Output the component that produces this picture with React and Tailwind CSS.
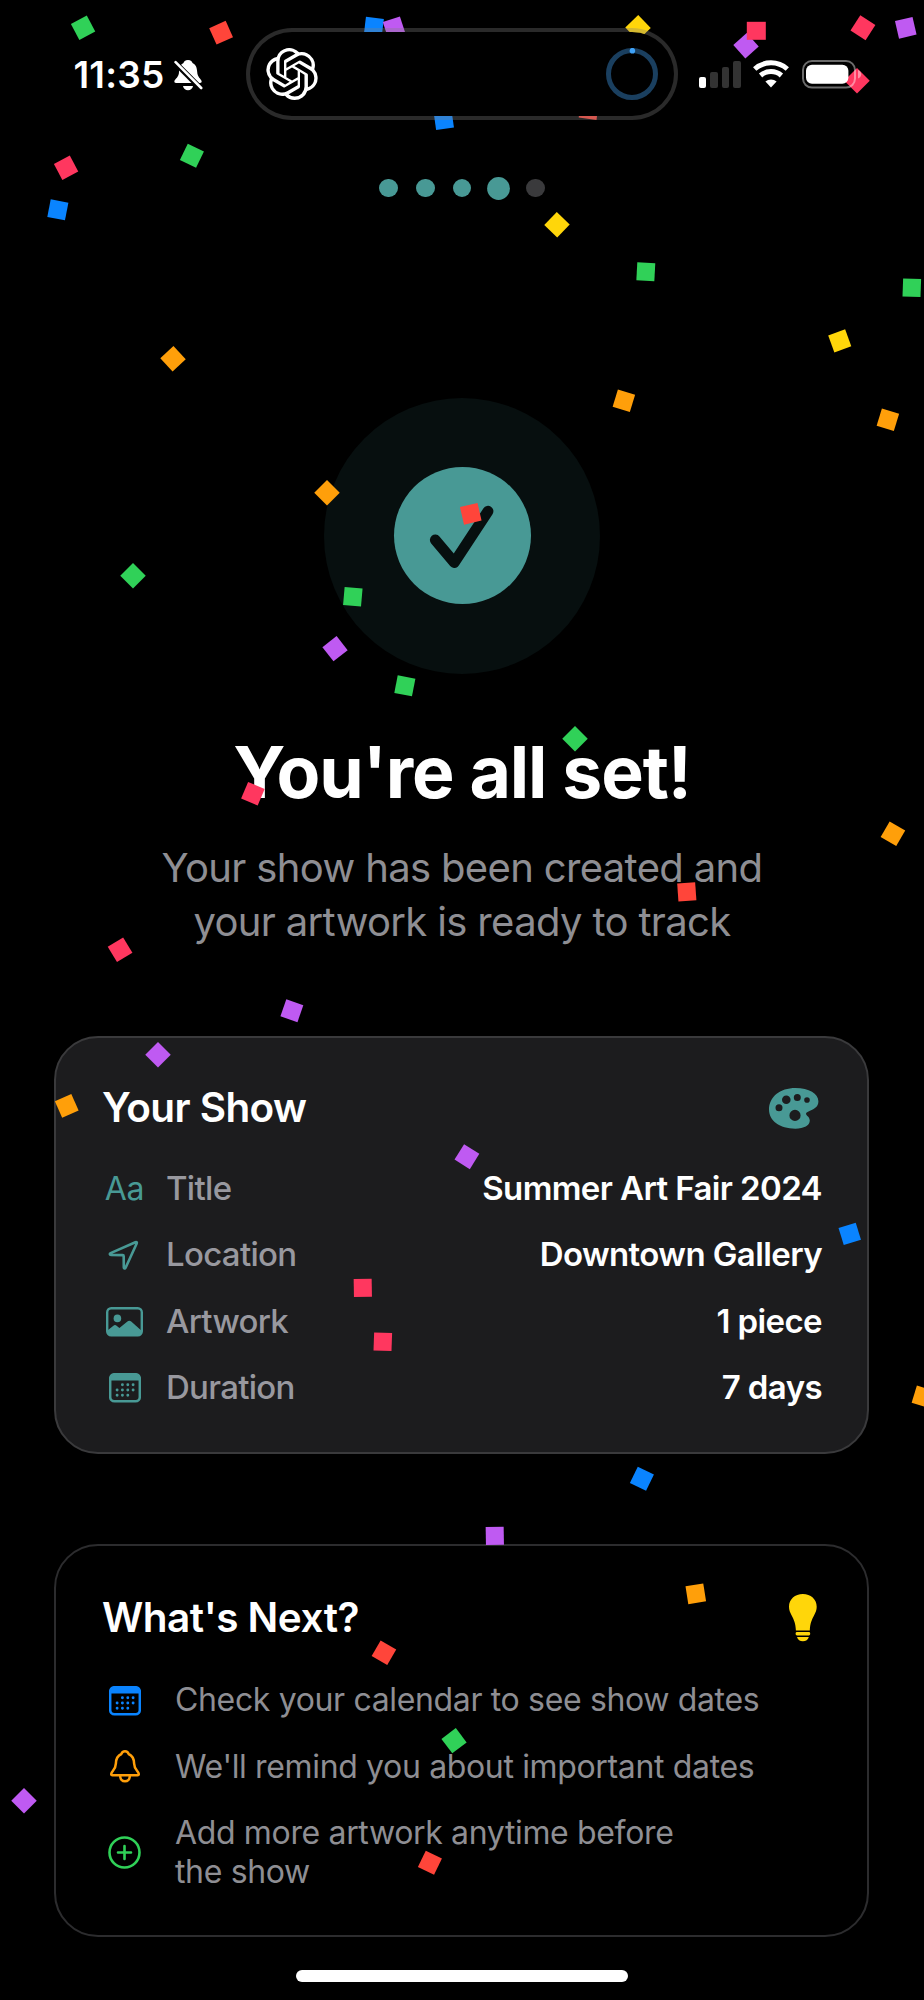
import React from "react";
import { SiOpenai } from "react-icons/si";

const RED = "#ff453a";
const PINK = "#ff375f";
const ORANGE = "#ff9f0a";
const YELLOW = "#ffd60a";
const GREEN = "#30d158";
const BLUE = "#0a84ff";
const PURPLE = "#bf5af2";

// [center x, center y, rotation, color]
const confetti = [
  [83, 27.6, 62, GREEN],
  [220.7, 33.4, 66, RED],
  [373.6, 27.3, 7, BLUE],
  [394, 27.8, 72, PURPLE],
  [66, 168.3, 62, PINK],
  [58.3, 210, 11, BLUE],
  [191.7, 155.7, 26, GREEN],
  [443.7, 120.3, -8, BLUE],
  [638.3, 27.5, 46, YELLOW],
  [746, 46.3, 48, PURPLE],
  [756.3, 30.7, 0, PINK],
  [863.3, 27.5, 33, PINK],
  [906, 27.7, -13, PURPLE],
  [856.5, 81, 45, PINK],
  [588.7, 110.2, 8, RED],
  [557, 224.5, 44, YELLOW],
  [172.7, 358.7, 47, ORANGE],
  [326.5, 493.3, 45, ORANGE],
  [132.7, 575.5, 45, GREEN],
  [353.3, 597.3, 5, GREEN],
  [334.8, 648.7, 52, PURPLE],
  [404.7, 686, 11, GREEN],
  [646, 272, 3, GREEN],
  [911.7, 288, 2, GREEN],
  [840.3, 340.7, -20, YELLOW],
  [623.7, 400.7, 17, ORANGE],
  [888, 419.7, 17, ORANGE],
  [471, 514.3, -13, RED],
  [253, 794.3, 23, PINK],
  [119.7, 950.3, 59, PINK],
  [292, 1011, 19, PURPLE],
  [574.7, 739, 45, GREEN],
  [893.3, 834.3, 30, ORANGE],
  [687.3, 892.3, -4, RED],
  [158, 1055.3, 45, PURPLE],
  [67, 1106, -24, ORANGE],
  [362.7, 1287.7, -1, PINK],
  [383, 1342, 2, PINK],
  [467.3, 1156.5, 32, PURPLE],
  [850.3, 1234.3, -17, BLUE],
  [923.4, 1396.5, 17, ORANGE],
  [642, 1479.3, 26, BLUE],
  [494.8, 1536.4, -1, PURPLE],
  [696.3, 1594.3, -9, ORANGE],
  [384, 1652.8, 30, RED],
  [454.3, 1740.6, 53, GREEN],
  [24, 1801.3, 45, PURPLE],
  [429.7, 1862.9, 26, RED],
];

const Confetti = () => (
  <div className="pointer-events-none absolute inset-0 z-10 overflow-hidden">
    {confetti.map(([x, y, angle, color]) => (
      <span
        key={`${x}-${y}`}
        className="absolute size-[18.4px] -translate-1/2"
        style={{ left: x, top: y, rotate: `${angle}deg`, backgroundColor: color }}
      />
    ))}
  </div>
);

const BellSlashIcon = () => (
  <svg width="29" height="31" viewBox="0 0 29 31" className="mt-0.5 ml-2.5">
    <path
      fill="#fff"
      d="M14 0C11.2 0 9.8 1.6 9.5 3C6.2 4.6 5 8 5 12C5 17 1 19 .4 21C.1 22.3 .8 23 2 23H26C27.2 23 27.9 22.3 27.6 21C27 19 23.4 17 23.2 12C23 8 22 4.6 18.5 3C18.2 1.6 16.8 0 14 0ZM9 26H19C18.6 28.6 16.6 30.2 14 30.2S9.4 28.6 9 26Z"
    />
    <path d="M.6 2.2L27.6 29.2" stroke="#000" strokeWidth="5.6" />
    <path d="M1.6 2.2L27.2 28" stroke="#fff" strokeWidth="2.6" strokeLinecap="round" />
  </svg>
);

const WifiIcon = () => (
  <svg width="36" height="28" viewBox="-18 -27.4 36 28" className="ml-3" fill="none" stroke="#fff" strokeWidth="5">
    <path d="M-16.3 -18.4A24.6 24.6 0 0 1 16.3 -18.4" />
    <path d="M-10.4 -11.9A15.8 15.8 0 0 1 10.4 -11.9" />
    <path d="M0 0L-5.6 -5.8A8.2 8.2 0 0 1 5.6 -5.8Z" fill="#fff" stroke="none" />
  </svg>
);

const BatteryIcon = () => (
  <svg width="60" height="29" viewBox="0 0 60 29" className="ml-[13px]">
    <rect x="1" y="1" width="52" height="26.6" rx="9" fill="none" stroke="#fff" strokeOpacity=".42" strokeWidth="2" />
    <rect x="4" y="4.8" width="42.4" height="19" rx="6" fill="#fff" />
    <path d="M56 10C58.2 10.8 59.2 12.4 59.2 14.3S58.2 17.8 56 18.6Z" fill="#fff" fillOpacity=".45" />
  </svg>
);

const StatusBar = () => (
  <header className="relative z-20 flex h-[120px] items-end">
    <div className="flex h-[92px] w-[246px] items-center pl-[73.5px]">
      <span className="mt-px text-[37px] font-semibold leading-none tracking-[0.2px]">11:35</span>
      <BellSlashIcon />
    </div>
    <div className="flex h-[92px] w-[432px] items-center justify-between rounded-full border-4 border-[rgba(128,128,128,0.33)] bg-black bg-clip-padding px-4">
      <SiOpenai size={52} />
      <svg width="52" height="52" viewBox="0 0 52 52" fill="none">
        <circle cx="26" cy="26" r="23.5" stroke="#1a3f5f" strokeWidth="5" />
        <circle cx="26.4" cy="2.7" r="2.8" fill="#3fa2f7" />
      </svg>
    </div>
    <div className="flex h-[92px] items-center pl-[20.5px]">
      <div className="flex h-[27px] items-end gap-1">
        <span className="h-[10.5px] w-[7.5px] rounded-[2px] bg-white" />
        <span className="h-[15.5px] w-[7.5px] rounded-[2px] bg-[#333]" />
        <span className="h-[21px] w-[7.5px] rounded-[2px] bg-[#333]" />
        <span className="h-[27px] w-[7.5px] rounded-[2px] bg-[#333]" />
      </div>
      <WifiIcon />
      <BatteryIcon />
    </div>
  </header>
);

const CalendarIcon = () => (
  <svg width="32" height="30" viewBox="0 0 32 30" fill="none">
    <rect x="1.2" y="1.2" width="29.6" height="27.1" rx="4.2" stroke="currentColor" strokeWidth="2.5" />
    <path d="M1 7.4V5A4 4 0 0 1 5 1H27A4 4 0 0 1 31 5V7.4Z" fill="currentColor" />
    <g stroke="currentColor" strokeWidth="2.9" strokeLinecap="round">
      <path d="M13.4 11.8h.01M18.8 11.8h.01M24.1 11.8h.01" />
      <path d="M8.1 17h.01M13.4 17h.01M18.8 17h.01M24.1 17h.01" />
      <path d="M8.1 22.3h.01M13.4 22.3h.01M18.8 22.3h.01" />
    </g>
  </svg>
);

const LocationIcon = () => (
  <svg width="31" height="31" viewBox="0 0 31 31" className="mr-0.5" fill="none" stroke="currentColor" strokeWidth="2.6" strokeLinejoin="round">
    <path d="M27.4 2.2L2.6 13.1C1.4 13.7 1.6 14.9 3 14.9L14.6 15.1C15.4 15.1 15.7 15.4 15.7 16.2L15.8 27.4C15.8 28.7 17 28.9 17.6 27.7L28.7 3.5C29.2 2.3 28.6 1.7 27.4 2.2Z" />
  </svg>
);

const ImageIcon = () => (
  <svg width="37" height="30" viewBox="0 0 37 30" fill="none">
    <rect x="1.2" y="1.2" width="34.6" height="27" rx="4" stroke="currentColor" strokeWidth="2.4" />
    <circle cx="11.4" cy="11.4" r="3.8" fill="currentColor" />
    <path
      fill="currentColor"
      d="M1.4 23.6L7.4 18.7Q9 17.4 10.6 18.7L13.4 21L21.4 14.4Q23.3 12.9 25.2 14.4L35.6 23.8V25Q35.6 28.4 32 28.4H5Q1.4 28.4 1.4 25Z"
    />
  </svg>
);

const PaletteIcon = () => (
  <svg width="50" height="41" viewBox="0 0 50 41">
    <path
      fill="currentColor"
      fillRule="evenodd"
      d="M26.5 0C40 0 49.4 5.6 49.4 13.2C49.4 18.6 45.6 20.8 41 22.8C38 24.2 36.4 25 37.2 26.4C38 28 40.8 29 40.8 32.6C40.8 37.6 35 40.7 26.4 40.7C10.6 40.7 0 33 0 21.6C0 9 10.8 0 26.5 0Z
      M6.5 19.8a3.5 3.5 0 1 0 7 0a3.5 3.5 0 1 0-7 0Z
      M13 11.8a4.3 4.3 0 1 0 8.6 0a4.3 4.3 0 1 0-8.6 0Z
      M24.8 9.4a3.5 3.5 0 1 0 7 0a3.5 3.5 0 1 0-7 0Z
      M35.2 12a2.8 2.8 0 1 0 5.6 0a2.8 2.8 0 1 0-5.6 0Z
      M20.4 27.4a5.6 5.6 0 1 0 11.2 0a5.6 5.6 0 1 0-11.2 0Z"
    />
  </svg>
);

const BulbIcon = () => (
  <svg width="28" height="48" viewBox="0 0 28 48" fill="currentColor">
    <path d="M6.9 36.4C6.6 29.5 5 26 2.8 21.8C1 18.4 0 16 0 12.8C0 5.2 6 0 13.85 0S27.7 5.2 27.7 12.8C27.7 16 26.7 18.4 24.9 21.8C22.7 26 21.1 29.5 20.8 36.4Z" />
    <rect x="6.6" y="38" width="14.6" height="3.4" rx="1.4" />
    <path d="M8 43H19.8C19.2 45.8 16.8 47.3 13.9 47.3S8.6 45.8 8 43Z" />
  </svg>
);

const BellIcon = () => (
  <svg width="30" height="33" viewBox="0 0 30 33" fill="none" stroke="currentColor" strokeWidth="2.5" strokeLinejoin="round">
    <path d="M15 1.3C12.8 1.3 11.8 2.6 11.4 4C7.4 5.8 6 9 5.9 13.4C5.8 19.8 1.2 21.4 1.2 24.2Q1.2 25.2 2.4 25.2H27.6Q28.8 25.2 28.8 24.2C28.8 21.4 24.2 19.8 24.1 13.4C24 9 22.6 5.8 18.6 4C18.2 2.6 17.2 1.3 15 1.3Z" />
    <path d="M10.2 26C10.2 29.2 12.2 31.3 15 31.3S19.8 29.2 19.8 26" />
  </svg>
);

const PlusCircleIcon = () => (
  <svg width="33" height="33" viewBox="0 0 33 33" fill="none" stroke="currentColor" strokeWidth="2.6" strokeLinecap="round">
    <circle cx="16.5" cy="16.5" r="15" />
    <path d="M16.5 10V23M10 16.5H23" />
  </svg>
);

const showDetails = [
  { label: "Title", value: "Summer Art Fair 2024", icon: <span className="text-[32px] tracking-[-0.3px]">Aa</span> },
  { label: "Location", value: "Downtown Gallery", icon: <LocationIcon /> },
  { label: "Artwork", value: "1 piece", icon: <ImageIcon /> },
  { label: "Duration", value: "7 days", icon: <CalendarIcon /> },
];

const nextSteps = [
  { text: "Check your calendar to see show dates", icon: <CalendarIcon />, color: "text-[#0a84ff]" },
  { text: "We'll remind you about important dates", icon: <BellIcon />, color: "text-[#ff9f0a]" },
  { text: "Add more artwork anytime before\nthe show", icon: <PlusCircleIcon />, color: "text-[#30d158]" },
];

const App = () => {
  return (
    <div className="relative flex h-[2000px] w-[924px] flex-col overflow-hidden bg-black font-['Inter',sans-serif] text-white">
      <Confetti />
      <StatusBar />

      <div className="mt-[58.5px] flex justify-center gap-[18px]">
        <span className="size-[18.8px] rounded-full bg-[#489995]" />
        <span className="size-[18.8px] rounded-full bg-[#489995]" />
        <span className="size-[18.8px] rounded-full bg-[#489995]" />
        <span className="size-[18.8px] scale-120 rounded-full bg-[#489995]" />
        <span className="size-[18.8px] rounded-full bg-[#3a3a3c]" />
      </div>

      <div className="mt-[200.5px] flex size-[276px] items-center justify-center self-center rounded-full bg-[#070f0f]">
        <div className="size-[137px] rounded-full bg-[#489995]">
          <svg width="137" height="137" viewBox="0 0 137 137" fill="none">
            <path
              d="M41.3 73L60.3 95.5L94 44.2"
              stroke="#070f0f"
              strokeWidth="10.8"
              strokeLinecap="round"
              strokeLinejoin="round"
            />
          </svg>
        </div>
      </div>

      <h1 className="mt-[55px] text-center text-[71.5px] font-bold leading-[86px] tracking-[-1.1px]">You're all set!</h1>
      <p className="mt-[26px] text-center text-[40px] leading-[54px] tracking-[-0.65px] text-[#8e8e93]">
        Your show has been created and
        <br />
        your artwork is ready to track
      </p>

      <section className="mr-[55px] ml-[54px] mt-[87px] h-[418.5px] rounded-[44px] border-2 border-[#3a3a3c] bg-[#1c1c1e] pr-[45px] pl-[46px] pt-[46.5px]">
        <div className="flex h-12 items-center justify-between">
          <h2 className="text-[40.5px] font-semibold tracking-[-0.6px]">Your Show</h2>
          <span className="mr-[3px] text-[#489995]">
            <PaletteIcon />
          </span>
        </div>
        <div className="mt-[36.5px] flex flex-col gap-[26.4px]">
          {showDetails.map((row) => (
            <div key={row.label} className="flex h-10 items-center text-[33px] font-medium tracking-[-0.7px]">
              <span className="flex w-[45px] justify-center font-normal text-[#489995]">{row.icon}</span>
              <span className="ml-[19px] text-[#98989f]">{row.label}</span>
              <span className="ml-auto font-semibold tracking-[-0.6px]">{row.value}</span>
            </div>
          ))}
        </div>
      </section>

      <section className="mr-[55px] ml-[54px] mt-[90px] h-[393px] rounded-[44px] border-2 border-[#2c2c2e] pr-[45px] pl-[46px] pt-[48px]">
        <div className="flex h-12 items-center justify-between">
          <h2 className="text-[40.5px] font-semibold tracking-[-0.5px]">What's Next?</h2>
          <span className="mr-[5px] text-[#ffd60a]">
            <BulbIcon />
          </span>
        </div>
        <div className="mt-[39px] flex flex-col gap-[27.6px]">
          {nextSteps.map((step) => (
            <div key={step.text} className="flex items-center">
              <span className={`flex w-[45px] shrink-0 justify-center ${step.color}`}>{step.icon}</span>
              <p className="ml-[28px] text-[32px] leading-[38.7px] tracking-[-0.35px] whitespace-pre-line text-[#8e8e93]">
                {step.text}
              </p>
            </div>
          ))}
        </div>
      </section>

      <div className="mt-[33px] h-3 w-[332px] self-center rounded-full bg-white" />
    </div>
  );
};

export default App;
